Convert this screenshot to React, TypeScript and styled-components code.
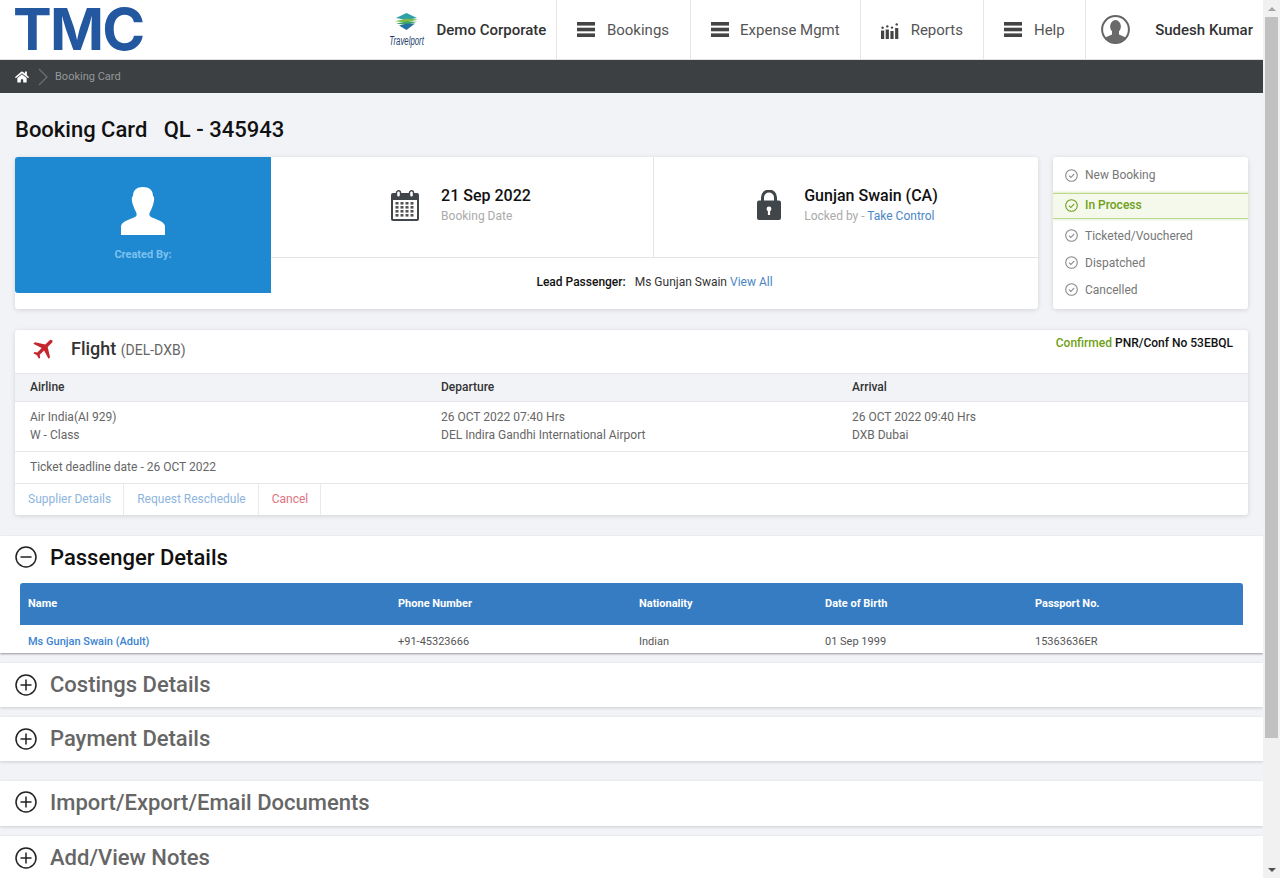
import React from "react";
import styled, { createGlobalStyle } from "styled-components";
import { FaHome } from "react-icons/fa";
import { MdFlight } from "react-icons/md";

const Global = createGlobalStyle`
  html, body { height: 100%; overflow: hidden; }
  body { margin: 0; background: #f1f3f7; font-family: Roboto, "Liberation Sans", sans-serif; color: #333; }
  * { box-sizing: border-box; }
`;

const Shell = styled.div`
  display: flex;
  height: 100vh;
  overflow: hidden;
`;

const Page = styled.div`
  flex: 1;
  min-width: 0;
  height: 100vh;
  overflow-y: auto;
  scrollbar-width: none;
  &::-webkit-scrollbar { display: none; }
`;

const PageInner = styled.div`
  min-height: 1028px;
`;

const ScrollRail = styled.div`
  flex: 0 0 17px;
  background: #f1f1f1;
  display: flex;
  flex-direction: column;
  align-items: center;
`;

const ScrollButton = styled.div<{ $down?: boolean }>`
  flex: 0 0 17px;
  width: 100%;
  display: flex;
  align-items: center;
  justify-content: center;
  &::before {
    content: "";
    border-left: 4px solid transparent;
    border-right: 4px solid transparent;
    ${(p) => (p.$down ? "border-top: 4px solid #505050;" : "border-bottom: 4px solid #a3a3a3;")}
  }
`;

const ScrollThumb = styled.div`
  width: 13px;
  margin-left: 2px;
  align-self: flex-start;
  height: 721px;
  background: #c1c1c1;
  margin-bottom: auto;
`;

const Header = styled.header`
  height: 60px;
  background: #fff;
  border-bottom: 1px solid #e2e2e2;
  display: flex;
  align-items: stretch;
  padding-left: 15px;
`;

const Logo = styled.div`
  font-family: Inter, "Liberation Sans", sans-serif;
  font-weight: 700;
  font-size: 58px;
  line-height: 58px;
  letter-spacing: -1.8px;
  color: #23579f;
  margin-right: auto;
  margin-left: -2px;
`;

const TravelportBox = styled.div`
  width: 36px;
  display: flex;
  flex-direction: column;
  align-items: center;
  justify-content: center;
  gap: 6px;
  margin-right: 12px;
`;

const TravelportText = styled.span`
  font-family: "Liberation Sans", sans-serif;
  font-size: 12px;
  line-height: 11px;
  font-style: italic;
  white-space: nowrap;
  transform: scaleX(0.65);
  color: #1d3f6e;
`;

const Corporate = styled.div`
  display: flex;
  align-items: center;
  font-size: 15px;
  font-weight: 500;
  color: #333;
  padding-right: 10px;
`;

const NavItem = styled.div`
  display: flex;
  align-items: center;
  gap: 11.5px;
  padding: 0 20.5px 0 20px;
  border-left: 1px solid #e6e6e6;
  font-size: 15px;
  color: #555;
`;

const UserBox = styled.div`
  display: flex;
  align-items: center;
  gap: 25px;
  padding: 0 10px 0 15px;
  border-left: 1px solid #e6e6e6;
  font-size: 15px;
  font-weight: 500;
  color: #333;
`;

const Crumbs = styled.nav`
  height: 33px;
  background: #3c4043;
  display: flex;
  align-items: center;
  padding-left: 15px;
  color: #fff;
  font-size: 11px;
`;

const CrumbLabel = styled.span`
  color: #94989b;
  margin-left: 7px;
`;

const Content = styled.main`
  padding: 24px 15px 0;
`;

const Title = styled.h1`
  margin: 0 0 14px;
  font-size: 22px;
  line-height: 26px;
  font-weight: 500;
  color: #111;
  white-space: pre;
`;

const TopRow = styled.div`
  display: flex;
  gap: 15px;
  height: 152px;
`;

const Card = styled.section`
  background: #fff;
  border-radius: 3px;
  box-shadow: 0 1px 5px rgba(0, 0, 0, 0.13);
`;

const SummaryCard = styled(Card)`
  flex: 1;
  display: flex;
  align-items: flex-start;
`;

const Creator = styled.div`
  width: 256px;
  height: 136px;
  background: #1e88d0;
  border-radius: 3px 0 0 3px;
  display: flex;
  flex-direction: column;
  align-items: center;
  padding-top: 30px;
`;

const CreatorLabel = styled.span`
  margin-top: 13px;
  font-size: 11px;
  font-weight: 700;
  color: #7cc1ee;
`;

const SummaryBody = styled.div`
  flex: 1;
  height: 100%;
  display: flex;
  flex-direction: column;
`;

const Cells = styled.div`
  height: 101px;
  display: flex;
  border-bottom: 1px solid #e4e4e4;
`;

const Cell = styled.div<{ $divided?: boolean }>`
  flex: ${(p) => (p.$divided ? "0 0 383px" : "1")};
  display: flex;
  align-items: center;
  justify-content: center;
  gap: ${(p) => (p.$divided ? 22 : 23)}px;
  padding: ${(p) => (p.$divided ? "0 2px 4px 0" : "0 0 4px 3px")};
  ${(p) => (p.$divided ? "border-right: 1px solid #e4e4e4;" : "")}
`;

const CellText = styled.div`
  display: flex;
  flex-direction: column;
`;

const CellMain = styled.div`
  font-size: 16px;
  line-height: 20px;
  font-weight: 500;
  color: #111;
`;

const CellSub = styled.div`
  margin-top: 3px;
  font-size: 12px;
  line-height: 15px;
  color: #aaa;
`;

const Link = styled.a`
  color: #4a86c5;
`;

const LeadRow = styled.div`
  flex: 1;
  padding-bottom: 3px;
  display: flex;
  align-items: center;
  justify-content: center;
  font-size: 12px;
  color: #333;
  gap: 3px;
`;

const LeadLabel = styled.b`
  font-weight: 500;
  color: #111;
  margin-right: 6px;
`;

const StatusCard = styled(Card)`
  width: 195px;
`;

const Status = styled.div<{ $active?: boolean; $h: number; $top?: number }>`
  height: ${(p) => p.$h}px;
  padding-top: ${(p) => p.$top ?? 0}px;
  display: flex;
  align-items: center;
  gap: 7px;
  padding-left: 12px;
  font-size: 12px;
  color: ${(p) => (p.$active ? "#6f9f17" : "#777")};
  font-weight: ${(p) => (p.$active ? 500 : 400)};
  ${(p) =>
    p.$active
      ? "padding-bottom:2px;background:#f4f9ec;border-top:1px solid #bcd98c;border-bottom:1px solid #bcd98c;box-shadow:0 -1px 2px #dcebc4,0 1px 2px #e6f0d6;"
      : ""}
`;

const FlightCard = styled(Card)`
  margin-top: 21px;
`;

const FlightHead = styled.div`
  height: 43px;
  display: flex;
  align-items: center;
  padding: 0 15px 6px 16px;
`;

const PlaneIcon = styled(MdFlight)`
  transform: rotate(45deg);
  flex: none;
`;

const FlightTitle = styled.div`
  margin-left: 13px;
  font-size: 18px;
  font-weight: 500;
  color: #333;
`;

const FlightRoute = styled.span`
  font-size: 14px;
  font-weight: 400;
  color: #666;
`;

const Pnr = styled.div`
  margin-left: auto;
  align-self: flex-start;
  margin-top: 6px;
  font-size: 12px;
  line-height: 14px;
  font-weight: 500;
  color: #111;
`;

const Confirmed = styled.span`
  color: #6f9f17;
`;

const FlightGrid = styled.div<{ $head?: boolean }>`
  display: grid;
  grid-template-columns: repeat(3, 411px);
  padding: ${(p) => (p.$head ? "4px 15px" : "6px 15px")};
  border-top: 1px solid #e6e7ea;
  font-size: 12px;
  line-height: 18px;
  height: ${(p) => (p.$head ? 28 : 50)}px;
  color: ${(p) => (p.$head ? "#333" : "#666")};
  font-weight: ${(p) => (p.$head ? 500 : 400)};
  background: ${(p) => (p.$head ? "#f2f3f7" : "#fff")};
`;

const Deadline = styled.div`
  height: 32px;
  display: flex;
  align-items: center;
  padding: 0 0 2px 15px;
  border-top: 1px solid #e6e7ea;
  font-size: 12px;
  color: #666;
`;

const Actions = styled.div`
  height: 32px;
  display: flex;
  border-top: 1px solid #e6e7ea;
`;

const Action = styled.div<{ $danger?: boolean }>`
  display: flex;
  align-items: center;
  padding: 0 12px 2px 13px;
  border-right: 1px solid #eaeaea;
  font-size: 12px;
  color: ${(p) => (p.$danger ? "#e0737f" : "#8db5dd")};
`;

const Section = styled.section<{ $top: number; $h: number; $raised?: boolean }>`
  margin-top: ${(p) => p.$top}px;
  min-height: ${(p) => p.$h}px;
  background: #fff;
  box-shadow: ${(p) =>
    p.$raised ? "0 1px 2px rgba(0, 0, 0, 0.38)" : "0 1px 3px rgba(0, 0, 0, 0.16)"};
`;

const SectionHead = styled.div<{ $h: number; $drop: number }>`
  height: ${(p) => p.$h}px;
  padding-bottom: ${(p) => p.$drop}px;
  display: flex;
  align-items: center;
  gap: 13px;
  padding-left: 15px;
`;

const SectionTitle = styled.h2<{ $open?: boolean }>`
  margin: 0;
  font-size: 22px;
  font-weight: 500;
  color: ${(p) => (p.$open ? "#111" : "#666")};
`;

const Table = styled.div`
  margin: 0 20px;
`;

const TableRow = styled.div<{ $head?: boolean }>`
  display: grid;
  grid-template-columns: 370px 241px 186px 210px 1fr;
  align-items: center;
  height: ${(p) => (p.$head ? 42 : 28)}px;
  padding: ${(p) => (p.$head ? "0 8px 2px" : "4px 8px 0")};
  background: ${(p) => (p.$head ? "#367cc2" : "transparent")};
  border-radius: ${(p) => (p.$head ? "3px 3px 0 0" : "0")};
  color: ${(p) => (p.$head ? "#fff" : "#555")};
  font-size: 11px;
  font-weight: ${(p) => (p.$head ? 700 : 400)};
`;

const PaxName = styled.span`
  color: #3a84cf;
  font-weight: 500;
`;

const NotesBody = styled.div`
  height: 150px;
`;

const Bars = () => (
  <svg width="18" height="15" viewBox="0 0 18 15" fill="#444">
    <rect y="0" width="18" height="3.6" />
    <rect y="5.7" width="18" height="3.6" />
    <rect y="11.4" width="18" height="3.6" />
  </svg>
);

const ReportsIcon = () => (
  <svg width="18" height="16" viewBox="0 0 18 16" fill="#444" style={{ marginTop: 3 }}>
    <rect x="0" y="7.5" width="3.2" height="8.5" />
    <rect x="4.7" y="6.5" width="3.2" height="9.5" />
    <rect x="9.4" y="8" width="3.2" height="8" />
    <rect x="14.1" y="5" width="3.2" height="11" />
    <circle cx="1.6" cy="4.8" r="1.2" />
    <circle cx="6.3" cy="3.4" r="1.2" />
    <circle cx="11" cy="4.6" r="1.2" />
    <circle cx="15.7" cy="1.4" r="1.2" />
  </svg>
);

const TravelportMark = () => (
  <svg width="27" height="17" viewBox="0 0 27 17">
    <path d="M13.5 0 24 5 13.5 7 3 5Z" fill="#2f9fa8" />
    <path d="M2 8.2 13.5 5.6 25 6.4 13.5 9.4Z" fill="#7dbb45" />
    <path d="M3 10.4 13.5 8.4 24 8.8 13.5 12Z" fill="#3aa36a" />
    <path d="M6 12.4 13.5 10.8 22 10.4 13.5 17Z" fill="#24709f" />
  </svg>
);

const Avatar = () => (
  <svg width="29" height="29" viewBox="0 0 29 29">
    <defs>
      <clipPath id="avatar-clip"><circle cx="14.5" cy="14.5" r="13" /></clipPath>
    </defs>
    <circle cx="14.5" cy="14.5" r="13.4" fill="#fff" stroke="#666" strokeWidth="2" />
    <g clipPath="url(#avatar-clip)" fill="#6a6a6a">
      <ellipse cx="14.5" cy="11.5" rx="5.4" ry="6.4" />
      <path d="M11 16h7v3.5l8 3.5v8H3v-8l8-3.5Z" />
    </g>
  </svg>
);

const PersonIcon = () => (
  <svg width="44" height="48" viewBox="0 0 44 48" fill="#fff">
    <path d="M22 0c6 0 10 3 10 9 2 1 1 6 0 9-1 3-2 5-3 7-1 2-1 4 1 5 4 2 13 4 14 9v9H0v-9c1-5 10-7 14-9 2-1 2-3 1-5-1-2-2-4-3-7-1-3-2-8 0-9C12 3 16 0 22 0Z" />
  </svg>
);

const CalendarIcon = () => (
  <svg width="28" height="31" viewBox="0 0 28 31">
    <path d="M2 3h24a2 2 0 0 1 2 2v24a2 2 0 0 1-2 2H2a2 2 0 0 1-2-2V5a2 2 0 0 1 2-2Z" fill="#40464a" />
    <rect x="2" y="10" width="24" height="19" fill="#fff" />
    <rect x="5.5" y="0.8" width="4" height="6.5" rx="2" fill="#fff" stroke="#40464a" strokeWidth="1.4" />
    <rect x="18.5" y="0.8" width="4" height="6.5" rx="2" fill="#fff" stroke="#40464a" strokeWidth="1.4" />
    <g fill="#555">
      {[12, 16, 20, 24].map((y) =>
        [4, 9, 14, 19].map((x) => <rect key={`${x}-${y}`} x={x + 0.5} y={y} width="3" height="2.6" />)
      )}
    </g>
  </svg>
);

const LockIcon = () => (
  <svg width="24" height="30" viewBox="0 0 24 30">
    <path d="M5.5 12V7.5a6.5 6.5 0 0 1 13 0V12" fill="none" stroke="#40464a" strokeWidth="3" />
    <rect x="0" y="10.5" width="24" height="19.5" rx="2" fill="#40464a" />
    <circle cx="12" cy="19" r="2.4" fill="#fff" />
    <rect x="10.9" y="19" width="2.2" height="6" fill="#fff" />
  </svg>
);

const CheckCircle = ({ color }: { color: string }) => (
  <svg width="13" height="13" viewBox="0 0 13 13" fill="none" stroke={color}>
    <circle cx="6.5" cy="6.5" r="5.8" strokeWidth="1.1" />
    <path d="M4 6.7 5.9 8.5 9.2 4.8" strokeWidth="1.1" />
  </svg>
);

const Toggle = ({ open }: { open?: boolean }) => (
  <svg width="22" height="22" viewBox="0 0 22 22" fill="none" stroke="#222" strokeWidth="1.5">
    <circle cx="11" cy="11" r="10" />
    <path d="M5.5 11h11" />
    {!open && <path d="M11 5.5v11" />}
  </svg>
);

const Chevron = () => (
  <svg width="10" height="18" viewBox="0 0 10 18" fill="none" stroke="#6a6e71" strokeWidth="1.3" style={{ marginLeft: 9 }}>
    <path d="M1 1 9 9 1 17" />
  </svg>
);

const statuses = [
  { label: "New Booking", h: 36 },
  { label: "In Process", h: 26, active: true },
  { label: "Ticketed/Vouchered", h: 30, top: 3 },
  { label: "Dispatched", h: 27 },
  { label: "Cancelled", h: 27 },
];

export default function App() {
  return (
    <Shell>
      <Global />
      <Page>
        <PageInner>
          <Header>
            <Logo>TMC</Logo>
            <TravelportBox>
              <TravelportMark />
              <TravelportText>Travelport</TravelportText>
            </TravelportBox>
            <Corporate>Demo Corporate</Corporate>
            <NavItem><Bars />Bookings</NavItem>
            <NavItem><Bars />Expense Mgmt</NavItem>
            <NavItem><ReportsIcon />Reports</NavItem>
            <NavItem><Bars />Help</NavItem>
            <UserBox><Avatar />Sudesh Kumar</UserBox>
          </Header>
          <Crumbs>
            <FaHome size={14} />
            <Chevron />
            <CrumbLabel>Booking Card</CrumbLabel>
          </Crumbs>
          <Content>
            <Title>{"Booking Card   QL - 345943"}</Title>
            <TopRow>
              <SummaryCard>
                <Creator>
                  <PersonIcon />
                  <CreatorLabel>Created By:</CreatorLabel>
                </Creator>
                <SummaryBody>
                  <Cells>
                    <Cell $divided>
                      <CalendarIcon />
                      <CellText>
                        <CellMain>21 Sep 2022</CellMain>
                        <CellSub>Booking Date</CellSub>
                      </CellText>
                    </Cell>
                    <Cell>
                      <LockIcon />
                      <CellText>
                        <CellMain>Gunjan Swain (CA)</CellMain>
                        <CellSub>Locked by - <Link>Take Control</Link></CellSub>
                      </CellText>
                    </Cell>
                  </Cells>
                  <LeadRow>
                    <LeadLabel>Lead Passenger:</LeadLabel>
                    <span>Ms Gunjan Swain</span>
                    <Link>View All</Link>
                  </LeadRow>
                </SummaryBody>
              </SummaryCard>
              <StatusCard>
                {statuses.map((s) => (
                  <Status key={s.label} $active={s.active} $h={s.h} $top={s.top}>
                    <CheckCircle color={s.active ? "#6f9f17" : "#888"} />
                    {s.label}
                  </Status>
                ))}
              </StatusCard>
            </TopRow>
            <FlightCard>
              <FlightHead>
                <PlaneIcon size={27} color="#c4262e" />
                <FlightTitle>Flight <FlightRoute>(DEL-DXB)</FlightRoute></FlightTitle>
                <Pnr><Confirmed>Confirmed</Confirmed> PNR/Conf No 53EBQL</Pnr>
              </FlightHead>
              <FlightGrid $head>
                <span>Airline</span><span>Departure</span><span>Arrival</span>
              </FlightGrid>
              <FlightGrid>
                <span>Air India(AI 929)<br />W - Class</span>
                <span>26 OCT 2022 07:40 Hrs<br />DEL Indira Gandhi International Airport</span>
                <span>26 OCT 2022 09:40 Hrs<br />DXB Dubai</span>
              </FlightGrid>
              <Deadline>Ticket deadline date - 26 OCT 2022</Deadline>
              <Actions>
                <Action>Supplier Details</Action>
                <Action>Request Reschedule</Action>
                <Action $danger>Cancel</Action>
              </Actions>
            </FlightCard>
          </Content>
          <Section $top={21} $h={117} $raised>
            <SectionHead $h={47} $drop={5}>
              <Toggle open />
              <SectionTitle $open>Passenger Details</SectionTitle>
            </SectionHead>
            <Table>
              <TableRow $head>
                <span>Name</span><span>Phone Number</span><span>Nationality</span><span>Date of Birth</span><span>Passport No.</span>
              </TableRow>
              <TableRow>
                <PaxName>Ms Gunjan Swain (Adult)</PaxName><span>+91-45323666</span><span>Indian</span><span>01 Sep 1999</span><span>15363636ER</span>
              </TableRow>
            </Table>
          </Section>
          <Section $top={10} $h={44}>
            <SectionHead $h={44} $drop={1}><Toggle /><SectionTitle>Costings Details</SectionTitle></SectionHead>
          </Section>
          <Section $top={10} $h={44}>
            <SectionHead $h={44} $drop={1}><Toggle /><SectionTitle>Payment Details</SectionTitle></SectionHead>
          </Section>
          <Section $top={20} $h={45}>
            <SectionHead $h={45} $drop={3}><Toggle /><SectionTitle>Import/Export/Email Documents</SectionTitle></SectionHead>
          </Section>
          <Section $top={10} $h={44}>
            <SectionHead $h={44} $drop={1}><Toggle /><SectionTitle>Add/View Notes</SectionTitle></SectionHead>
            <NotesBody />
          </Section>
        </PageInner>
      </Page>
      <ScrollRail>
        <ScrollButton />
        <ScrollThumb />
        <ScrollButton $down />
      </ScrollRail>
    </Shell>
  );
}
